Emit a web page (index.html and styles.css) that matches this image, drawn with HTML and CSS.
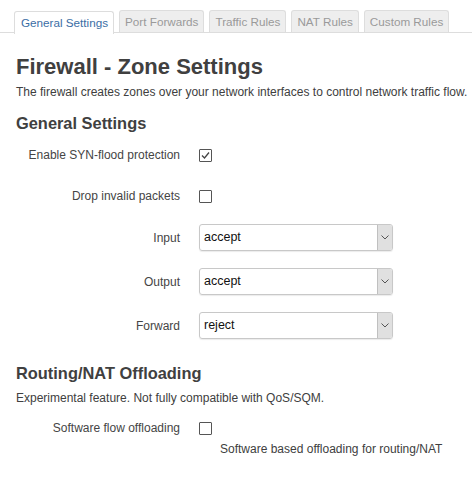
FILE: index.html
```html
<!DOCTYPE html>
<html>
<head>
<meta charset="utf-8">
<link rel="stylesheet" href="styles.css">
</head>
<body>
<ul class="tabs">
  <li class="tab active">General Settings</li>
  <li class="tab">Port Forwards</li>
  <li class="tab">Traffic Rules</li>
  <li class="tab">NAT Rules</li>
  <li class="tab">Custom Rules</li>
</ul>
<div class="content">
  <h2 class="title">Firewall - Zone Settings</h2>
  <p class="desc">The firewall creates zones over your network interfaces to control network traffic flow.</p>
  <h3 class="section">General Settings</h3>
  <div class="rows">
    <div class="row r-check r-syn">
      <span class="label">Enable SYN-flood protection</span>
      <span class="checkbox checked"><svg viewBox="0 0 13 13" width="13" height="13"><path d="M3 6.5 L5.5 9 L10 3.5" fill="none" stroke="#444" stroke-width="1.3"/></svg></span>
    </div>
    <div class="row r-check r-drop">
      <span class="label">Drop invalid packets</span>
      <span class="checkbox"></span>
    </div>
    <div class="row r-sel">
      <span class="label">Input</span>
      <div class="select"><span class="val">accept</span><span class="arrow"><svg viewBox="0 0 8 5" width="8" height="5"><path d="M0.5 0.5 L4 4 L7.5 0.5" fill="none" stroke="#555" stroke-width="1"/></svg></span></div>
    </div>
    <div class="row r-sel">
      <span class="label">Output</span>
      <div class="select"><span class="val">accept</span><span class="arrow"><svg viewBox="0 0 8 5" width="8" height="5"><path d="M0.5 0.5 L4 4 L7.5 0.5" fill="none" stroke="#555" stroke-width="1"/></svg></span></div>
    </div>
    <div class="row r-sel r-fwd">
      <span class="label">Forward</span>
      <div class="select"><span class="val">reject</span><span class="arrow"><svg viewBox="0 0 8 5" width="8" height="5"><path d="M0.5 0.5 L4 4 L7.5 0.5" fill="none" stroke="#555" stroke-width="1"/></svg></span></div>
    </div>
  </div>
  <h3 class="section section2">Routing/NAT Offloading</h3>
  <p class="desc desc2">Experimental feature. Not fully compatible with QoS/SQM.</p>
  <div class="row r-check r-last">
    <span class="label">Software flow offloading</span>
    <span class="checkbox"></span>
  </div>
  <div class="help">Software based offloading for routing/NAT</div>
</div>
</body>
</html>
```

FILE: styles.css
```css
html, body {
  margin: 0;
  padding: 0;
  background: #fff;
  font-family: "Liberation Sans", Arial, sans-serif;
  font-size: 12px;
  color: #404040;
}

.tabs {
  list-style: none;
  margin: 10px 0 0 0;
  padding: 0 0 0 10px;
  display: flex;
  gap: 5px;
  border-bottom: 1px solid #ddd;
  height: 22px;
}

.tab {
  box-sizing: border-box;
  height: 22px;
  padding: 0 5px;
  line-height: 21px;
  font-size: 11.7px;
  color: #9a9a9a;
  background: #eee;
  border: 1px solid #ddd;
  border-bottom: none;
  border-radius: 3px 3px 0 0;
}

.tab.active {
  margin-left: 4px;
  height: 23px;
  margin-top: 1px;
  padding: 0 5px 0 6px;
  background: #fff;
  color: #3a6ea5;
}

.content {
  padding: 0 0 0 16px;
}

.title {
  margin: 21px 0 0 0;
  font-size: 22px;
  font-weight: bold;
  line-height: 26px;
  color: #404040;
}

.desc {
  margin: 4px 0 0 0;
  line-height: 16px;
  color: #404040;
}

.section {
  margin: 13px 0 0 0;
  font-size: 16.4px;
  line-height: 20px;
  font-weight: bold;
  color: #404040;
}

.rows {
  margin-top: 11px;
  display: flex;
  flex-direction: column;
}

.row {
  display: grid;
  grid-template-columns: 164px auto;
  column-gap: 19px;
  align-items: center;
}

.label {
  text-align: right;
  color: #454545;
}

.r-check {
  height: 22px;
}

.r-syn {
  margin-bottom: 19px;
}

.r-drop {
  margin-bottom: 17px;
}

.r-sel {
  height: 27px;
  margin-bottom: 17px;
}

.r-fwd {
  margin-bottom: 0;
}

.checkbox {
  box-sizing: border-box;
  width: 13px;
  height: 13px;
  border: 1px solid #555;
  border-radius: 1px;
  display: flex;
  align-items: center;
  justify-content: center;
}

.checkbox svg {
  display: block;
  margin: -1px;
}

.select {
  box-sizing: border-box;
  width: 194px;
  height: 27px;
  border: 1px solid #c8c8c8;
  border-radius: 3px;
  box-shadow: 0 1px 1px rgba(0,0,0,0.08);
  display: flex;
  align-items: stretch;
  overflow: hidden;
}

.val {
  flex: 1;
  padding-left: 4px;
  line-height: 25px;
  font-size: 12.5px;
  color: #111;
}

.arrow {
  width: 14px;
  background: #e0e0e0;
  border-left: 1px solid #c0c0c0;
  display: flex;
  align-items: center;
  justify-content: center;
}

.arrow svg {
  display: block;
}

.section2 {
  margin-top: 24px;
}

.desc2 {
  margin-top: 7px;
}

.r-last {
  margin-top: 11px;
}

.help {
  margin: 2px 0 0 204px;
  line-height: 16px;
}
```
